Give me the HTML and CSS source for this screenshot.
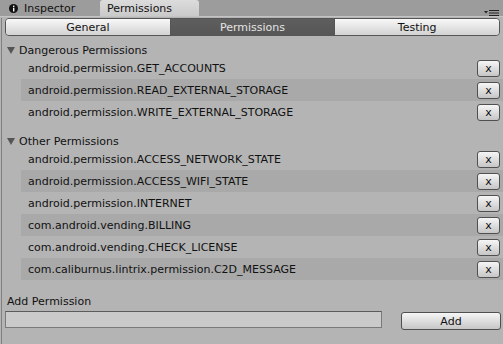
FILE: index.html
```html
<!DOCTYPE html>
<html lang="en">
<head>
    <meta charset="UTF-8">
    <title>Permissions</title>
    <link rel="stylesheet" href="styles.css">
</head>
<body>

<div class="window">
    <div class="tabbar">
        <div class="tab">
            <svg class="info-icon" width="9" height="9" viewBox="0 0 9 9">
                <circle cx="4.5" cy="4.5" r="4.5" fill="#111"/>
                <rect x="4" y="1.6" width="1.4" height="1.4" fill="#fff"/>
                <rect x="4" y="3.7" width="1.4" height="3.8" fill="#fff"/>
            </svg>
            Inspector
        </div>
        <div class="tab active">Permissions</div>
        <svg class="menu-icon" width="15" height="6" viewBox="0 0 15 6">
            <polygon points="0,1 4,1 2,3.5" fill="#222"/>
            <rect x="5" y="0" width="10" height="1" fill="#222"/>
            <rect x="5" y="2.5" width="10" height="1" fill="#222"/>
            <rect x="5" y="5" width="10" height="1" fill="#222"/>
        </svg>
    </div>

    <div class="content">
        <div class="toolbar">
            <button class="seg">General</button>
            <button class="seg on">Permissions</button>
            <button class="seg">Testing</button>
        </div>

        <div class="section">
            <div class="section-head">
                <svg class="fold" width="8" height="7" viewBox="0 0 8 7"><polygon points="0,0 8,0 4,7" fill="#555"/></svg>
                Dangerous Permissions
            </div>
            <div class="perm-row"><span>android.permission.GET_ACCOUNTS</span><button class="del">x</button></div>
            <div class="perm-row"><span>android.permission.READ_EXTERNAL_STORAGE</span><button class="del">x</button></div>
            <div class="perm-row"><span>android.permission.WRITE_EXTERNAL_STORAGE</span><button class="del">x</button></div>
        </div>

        <div class="section">
            <div class="section-head">
                <svg class="fold" width="8" height="7" viewBox="0 0 8 7"><polygon points="0,0 8,0 4,7" fill="#555"/></svg>
                Other Permissions
            </div>
            <div class="perm-row"><span>android.permission.ACCESS_NETWORK_STATE</span><button class="del">x</button></div>
            <div class="perm-row"><span>android.permission.ACCESS_WIFI_STATE</span><button class="del">x</button></div>
            <div class="perm-row"><span>android.permission.INTERNET</span><button class="del">x</button></div>
            <div class="perm-row"><span>com.android.vending.BILLING</span><button class="del">x</button></div>
            <div class="perm-row"><span>com.android.vending.CHECK_LICENSE</span><button class="del">x</button></div>
            <div class="perm-row"><span>com.caliburnus.lintrix.permission.C2D_MESSAGE</span><button class="del">x</button></div>
        </div>

        <div class="add-label">Add Permission</div>
        <div class="add-row">
            <input type="text" class="add-input">
            <button class="add-btn">Add</button>
        </div>
    </div>
</div>

</body>
</html>
```

FILE: styles.css
```css
* { box-sizing: border-box; margin: 0; padding: 0 }
body {
    font-family: "DejaVu Sans", "Liberation Sans", sans-serif;
    font-size: 11px;
    color: #111;
    background: #b4b4b4;
    width: 503px;
    height: 344px;
    overflow: hidden;
}
button {
    font-family: inherit;
    font-size: 11px;
    color: #111;
}

/* 顶部标签栏 */
.tabbar {
    height: 17px;
    background: #9c9c9c;
    border-bottom: 1px solid #c4c4c4;
    display: flex;
    align-items: flex-end;
    position: relative;
}
.tab {
    width: 100px;
    height: 16px;
    display: flex;
    align-items: center;
    padding-left: 9px;
    padding-top: 1px;
    color: #111;
}
.tab .info-icon { margin-right: 6px }
.tab.active {
    width: 99px;
    padding-left: 7px;
    background: linear-gradient(to bottom, #dcdcdc, #cacaca);
    border-radius: 3px 3px 0 0;
}
.menu-icon {
    position: absolute;
    right: 4px;
    top: 10px;
}

.content {
    border-left: 1px solid #808080;
    margin-left: 1px;
    height: 327px;
}

/* 分段按钮 */
.toolbar {
    display: flex;
    margin: 1px 3px 0 3px;
    height: 18px;
    border: 1px solid #555;
    border-radius: 4px;
    overflow: hidden;
}
.toolbar .seg {
    flex: 1;
    border: none;
    border-right: 1px solid #555;
    background: linear-gradient(to bottom, #f8f8f8, #d2d2d2);
}
.toolbar .seg:last-child { border-right: none }
.toolbar .seg.on {
    background: linear-gradient(to bottom, #5e5e5e, #565656);
    color: #e4e4e4;
}

.section { margin-top: 5px }
.section + .section { margin-top: 9px }
.section-head {
    height: 16px;
    display: flex;
    align-items: center;
    padding-left: 5px;
    padding-top: 2px;
}
.section-head .fold { margin-right: 4px }

.perm-row {
    height: 22px;
    margin-left: 19px;
    padding: 0 3px 0 7px;
    display: flex;
    align-items: center;
    justify-content: space-between;
}
.perm-row:nth-of-type(odd) { background: #a9a9a9 }
.del {
    width: 23px;
    height: 17px;
    border: 1px solid #505050;
    border-radius: 3px;
    background: linear-gradient(to bottom, #f6f6f6, #c6c6c6);
    line-height: 1;
}

.add-label {
    margin-top: 12px;
    padding-left: 5px;
    padding-top: 3px;
    height: 16px;
    display: flex;
    align-items: center;
}
.add-row {
    display: flex;
    align-items: flex-start;
    margin-top: 3px;
    padding-left: 3px;
}
.add-input {
    width: 377px;
    height: 17px;
    background: #cacaca;
    border: 1px solid #7a7a7a;
    border-top-color: #5c5c5c;
}
.add-btn {
    width: 100px;
    height: 18px;
    margin-left: 19px;
    margin-top: 1px;
    border: 1px solid #505050;
    border-radius: 3px;
    background: linear-gradient(to bottom, #f6f6f6, #c6c6c6);
}
```
